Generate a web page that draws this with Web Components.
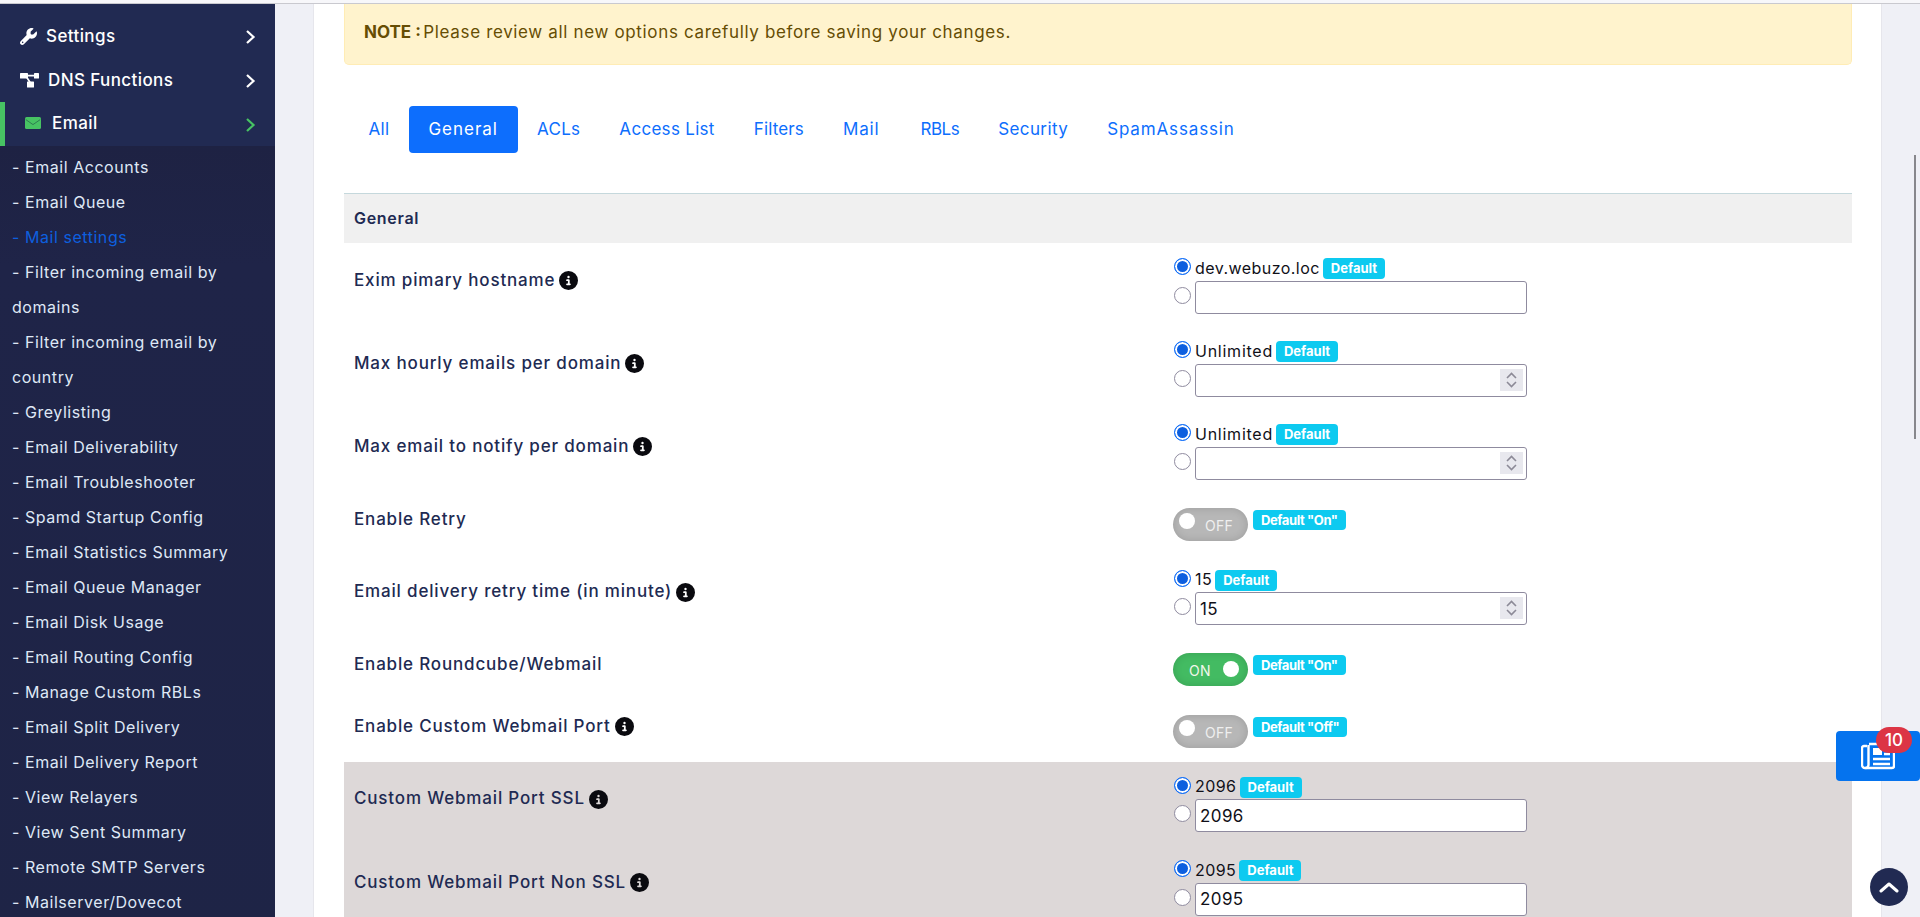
<!DOCTYPE html>
<html lang="en">
<head>
<meta charset="utf-8">
<title>Mail settings</title>
<style>
    html, body { margin: 0; height: 100%; overflow: hidden; background: #eff0f6; }
    body { font-family: Inter, "Noto Sans", sans-serif; }
</style>
</head>
<body>
<app-shell>
    <app-sidebar slot="side">
        <side-head icon="wrench" gap="9">Settings</side-head>
        <side-head icon="diagram" gap="9">DNS Functions</side-head>
        <side-head icon="envelope" gap="11" active>Email</side-head>
        <side-sub>
            <side-link>- Email Accounts</side-link>
            <side-link>- Email Queue</side-link>
            <side-link current>- Mail settings</side-link>
            <side-link>- Filter incoming email by<br>domains</side-link>
            <side-link>- Filter incoming email by<br>country</side-link>
            <side-link>- Greylisting</side-link>
            <side-link>- Email Deliverability</side-link>
            <side-link>- Email Troubleshooter</side-link>
            <side-link>- Spamd Startup Config</side-link>
            <side-link>- Email Statistics Summary</side-link>
            <side-link>- Email Queue Manager</side-link>
            <side-link>- Email Disk Usage</side-link>
            <side-link>- Email Routing Config</side-link>
            <side-link>- Manage Custom RBLs</side-link>
            <side-link>- Email Split Delivery</side-link>
            <side-link>- Email Delivery Report</side-link>
            <side-link>- View Relayers</side-link>
            <side-link>- View Sent Summary</side-link>
            <side-link>- Remote SMTP Servers</side-link>
            <side-link>- Mailserver/Dovecot</side-link>
        </side-sub>
    </app-sidebar>
    <content-card>
        <note-alert><b>NOTE :</b> Please review all new options carefully before saving your changes.</note-alert>
        <tab-bar>
            <tab-link style="--ls:.3px">All</tab-link>
            <tab-link style="--ls:1px" active>General</tab-link>
            <tab-link style="--ls:.3px">ACLs</tab-link>
            <tab-link style="--ls:.3px">Access List</tab-link>
            <tab-link style="--ls:.15px">Filters</tab-link>
            <tab-link style="--ls:.85px;margin-right:2px">Mail</tab-link>
            <tab-link style="--ls:-.5px">RBLs</tab-link>
            <tab-link style="--ls:.4px">Security</tab-link>
            <tab-link style="--ls:.85px">SpamAssassin</tab-link>
        </tab-bar>
        <section-head>General</section-head>
        <setting-row label="Exim pimary hostname" info>
            <radio-field value="dev.webuzo.loc"></radio-field>
        </setting-row>
        <setting-row label="Max hourly emails per domain" info>
            <radio-field style="--vls:.75px" value="Unlimited" spin></radio-field>
        </setting-row>
        <setting-row label="Max email to notify per domain" info>
            <radio-field style="--vls:.75px" value="Unlimited" spin></radio-field>
        </setting-row>
        <setting-row label="Enable Retry" kind="toggle">
            <toggle-field default="Default &quot;On&quot;"></toggle-field>
        </setting-row>
        <setting-row label="Email delivery retry time (in minute)" info>
            <radio-field value="15" input="15" spin></radio-field>
        </setting-row>
        <setting-row label="Enable Roundcube/Webmail" kind="toggle">
            <toggle-field on default="Default &quot;On&quot;"></toggle-field>
        </setting-row>
        <setting-row label="Enable Custom Webmail Port" kind="toggle" info>
            <toggle-field default="Default &quot;Off&quot;"></toggle-field>
        </setting-row>
        <setting-row label="Custom Webmail Port SSL" info shade>
            <radio-field value="2096" input="2096"></radio-field>
        </setting-row>
        <setting-row label="Custom Webmail Port Non SSL" info shade>
            <radio-field value="2095" input="2095"></radio-field>
        </setting-row>
    </content-card>
    <news-button count="10"></news-button>
    <top-button></top-button>
</app-shell>

<script>
const ICONS = {
    wrench: '<svg viewBox="0 0 512 512" width="17" height="17" fill="#fff"><path d="M352 320c88.4 0 160-71.6 160-160c0-15.3-2.2-30.1-6.2-44.2c-3.1-10.8-16.4-13.2-24.3-5.3l-76.8 76.8c-3 3-7.1 4.7-11.3 4.7H336c-8.8 0-16-7.2-16-16V118.6c0-4.2 1.7-8.3 4.7-11.3l76.8-76.8c7.9-7.9 5.4-21.2-5.3-24.3C382.1 2.2 367.3 0 352 0C263.6 0 192 71.6 192 160c0 19.1 3.4 37.5 9.5 54.5L19.9 396.1C7.2 408.8 0 426.1 0 444.1C0 481.6 30.4 512 67.9 512c18 0 35.3-7.2 48-19.9L297.5 310.5c17 6.2 35.4 9.5 54.5 9.5zM80 408a24 24 0 1 1 0 48 24 24 0 1 1 0-48z"/></svg>',
    diagram: '<svg viewBox="0 0 19 15" width="19" height="15" fill="#fff"><rect x="0" y="0" width="8" height="5.5" rx=".6"/><rect x="14" y="0" width="5" height="5.5" rx=".6"/><rect x="7" y="8.5" width="7" height="6" rx=".6"/><path d="M6 1.8h9v1.8H6zM5.5 4l1.4-1L11 9.2l-1.4 1z"/></svg>',
    envelope: '<svg viewBox="0 0 16 12" width="16" height="12"><rect width="16" height="12" rx="1.5" fill="#47c363"/><path d="M.8 2.6L8 7.6l7.2-5" fill="none" stroke="#2a6b4d" stroke-width=".8"/></svg>',
    info: '<svg viewBox="0 0 512 512" width="19" height="19" fill="#0a0a0f"><path d="M256 512A256 256 0 1 0 256 0a256 256 0 1 0 0 512zM216 336h24V272H216c-13.3 0-24-10.7-24-24s10.7-24 24-24h48c13.3 0 24 10.7 24 24v88h8c13.3 0 24 10.7 24 24s-10.7 24-24 24H216c-13.3 0-24-10.7-24-24s10.7-24 24-24zm40-208a32 32 0 1 1 0 64 32 32 0 1 1 0-64z"/></svg>',
    news: '<svg viewBox="0 0 34 28" width="34" height="28" fill="none" stroke="#fff" stroke-width="2.4" stroke-linejoin="round"><path d="M8 2h23a2 2 0 0 1 2 2v20a2 2 0 0 1-2 2H4a3 3 0 0 1-3-3V6a2 2 0 0 1 2-2h3"/><path d="M7.5 3v20a3 3 0 0 1-3 3"/><rect x="12" y="6" width="9" height="7" fill="#fff" stroke="none"/><path d="M12 17h17M12 22h17M23 7h6M23 12h6"/></svg>'
};

function define(name, css, html, setup) {
    customElements.define(name, class extends HTMLElement {
        connectedCallback() {
            if (this.shadowRoot) return;
            this.attachShadow({ mode: 'open' });
            const markup = typeof html === 'function' ? html(this) : html;
            this.shadowRoot.innerHTML = `<style>${css}</style>${markup}`;
            if (setup) setup(this);
        }
    });
}

define('app-shell', `
    :host { display: grid; grid-template-columns: 275px 1569px; column-gap: 38px; height: 917px; overflow: hidden; padding-top: 4px; box-sizing: border-box; position: relative; background: #eff0f6; }
    .line { position: absolute; left: 0; right: 0; top: 3px; height: 1px; background: #c9c9cf; }
    .strip { position: absolute; left: 0; right: 0; top: 0; height: 3px; background: #f7f7fa; }
    .thumb { position: absolute; left: 1914px; top: 155px; width: 2px; height: 284px; background: #87878c; }
`, `<div class="strip"></div><div class="line"></div><slot name="side"></slot><slot></slot><div class="thumb"></div>`);

define('app-sidebar', `
    :host { display: block; background: #212a52; padding-top: 10px; height: 913px; box-sizing: border-box; overflow: hidden; }
`, `<slot></slot>`);

define('side-head', `
    :host { display: flex; align-items: center; height: 44px; padding: 0 20px; color: #fff; font: 500 17px/24px Inter, sans-serif; letter-spacing: .4px; position: relative; box-sizing: border-box; }
    :host([active]) { padding: 0 20px 2px 25px; }
    :host([active])::before { content: ""; position: absolute; left: 0; top: 0; bottom: 0; width: 5px; background: #47c363; }
    .icon { display: flex; }
    .chev { position: absolute; left: 245px; top: 15px; }
`, el => `<span class="icon">${ICONS[el.getAttribute('icon')]}</span>
    <span style="margin-left:${el.getAttribute('gap')}px"><slot></slot></span>
    <svg class="chev" width="11" height="16" viewBox="0 0 11 16" fill="none" stroke="${el.hasAttribute('active') ? '#47c363' : '#fff'}" stroke-width="2.2"><path d="M2 2l6.5 6L2 14"/></svg>`);

define('side-sub', `
    :host { display: block; padding: 3.5px 0 0 12px; background: linear-gradient(#1e2243, #1f2448 120px, #1e2446); min-height: 800px; }
`, `<slot></slot>`);

define('side-link', `
    :host { display: block; color: #dfe8f6; font: 400 16px/35px Inter, sans-serif; letter-spacing: .55px; white-space: nowrap; }
    :host([current]) { color: #0d5fdf; }
`, `<slot></slot>`);

define('content-card', `
    :host { display: block; background: #fff; padding: 0 29px 0 30px; border-left: 1px solid #e6e6ec; border-right: 1px solid #e6e6ec; height: 913px; box-sizing: border-box; overflow: hidden; }
`, `<slot></slot>`);

define('note-alert', `
    :host { display: block; height: 61px; box-sizing: border-box; padding: 16px 19px 0; background: #fff3cd; border: 1px solid #ffecb5; border-top: 0; border-radius: 0 0 5px 5px; color: #664d03; font: 400 17px/24px Inter, sans-serif; letter-spacing: .65px; }
    ::slotted(b) { font-weight: 700; letter-spacing: 0; margin-right: -3px; }
`, `<slot></slot>`);

define('tab-bar', `
    :host { display: flex; padding: 41px 0 40px 5px; }
`, `<slot></slot>`);

define('tab-link', `
    :host { display: block; padding: 0 19.5px; height: 47px; font: 400 17px/47px Inter, sans-serif; letter-spacing: var(--ls, .5px); color: #0d6efd; border-radius: 4px; white-space: nowrap; }
    :host([active]) { background: #0d6efd; color: #fff; }
`, `<slot></slot>`);

define('section-head', `
    :host { display: block; height: 50px; box-sizing: border-box; border-top: 1px solid #c5d8dc; background: #f0f0f0; padding-left: 10px; font: 600 16px/49px Inter, sans-serif; color: #212a52; letter-spacing: .7px; }
`, `<slot></slot>`);

define('setting-row', `
    :host { display: grid; grid-template-columns: 829px 1fr; align-items: center; box-sizing: border-box; height: 83.2px; }
    :host([kind="toggle"]) { height: 62px; }
    :host([shade]) { background: #ddd8d8; }
    .label { display: flex; align-items: center; gap: 4px; padding: 0 0 10px 10px; font: 500 17px/24px Inter, sans-serif; letter-spacing: .83px; color: #212a52; }
    .info { display: flex; margin-top: 2px; }
`, el => `<div class="label"><span>${el.getAttribute('label')}</span>${el.hasAttribute('info') ? `<span class="info">${ICONS.info}</span>` : ''}</div><div><slot></slot></div>`);

define('default-badge', `
    :host { display: inline-block; height: 21px; padding: 0 8px; border-radius: 4px; background: #0dcaf0; color: #fff; font: 700 13px/21px Inter, sans-serif; white-space: nowrap; }
`, `<slot></slot>`);

define('radio-dot', `
    :host { display: inline-block; width: 17px; height: 17px; box-sizing: border-box; border-radius: 50%; background: #fff; border: 1px solid #8f8b9f; flex: none; }
    :host([checked]) { border-color: #0d6efd; background: #0d5fdf; box-shadow: inset 0 0 0 2px #fff; }
`, ``);

define('radio-field', `
    :host { display: block; padding-left: 1px; }
    .line { display: flex; align-items: center; height: 24px; margin-bottom: 1px; }
    .value { margin: 0 3px 0 4px; font: 400 16px/24px Inter, sans-serif; letter-spacing: var(--vls, .45px); color: #101018; }
    .line2 { display: flex; align-items: center; }
    radio-dot { margin-top: -4px; }
    .line radio-dot { margin-top: -2px; }
    default-badge { margin-top: 2px; }
    .box { position: relative; margin-left: 4px; width: 332px; height: 33px; box-sizing: border-box; border: 1px solid #8f8b9f; border-radius: 3px; background: #fff; }
    input { display: block; width: 100%; height: 100%; box-sizing: border-box; border: 0; outline: 0; padding: 0 4px; background: transparent; font: 400 17px Inter, sans-serif; letter-spacing: .4px; color: #101018; border-radius: 3px; }
    .spin { position: absolute; right: 3px; top: 4px; width: 23px; height: 22px; background: #e8e8ee; display: flex; align-items: center; justify-content: center; }
`, el => `<div class="line"><radio-dot checked></radio-dot><span class="value">${el.getAttribute('value')}</span><default-badge>Default</default-badge></div>
    <div class="line2"><radio-dot></radio-dot><div class="box"><input type="text" value="${el.getAttribute('input') || ''}">${el.hasAttribute('spin') ? `<span class="spin"><svg width="11" height="16" viewBox="0 0 11 16" fill="none" stroke="#8c8a97" stroke-width="1.6"><path d="M1 6l4.5-4.5L10 6M1 10l4.5 4.5L10 10"/></svg></span>` : ''}</div></div>`);

define('toggle-field', `
    :host { display: flex; align-items: flex-start; gap: 5px; padding-top: 1px; }
    .sw { position: relative; width: 75px; height: 33px; border-radius: 17px; background: #b7b7b7; box-shadow: inset 0 0 9px rgba(0,0,0,.14); color: #efefef; font: 400 14px/33px Inter, sans-serif; letter-spacing: .3px; }
    .sw.on { background: #43bb62; color: #f2f7ea; }
    .knob { position: absolute; top: 5px; left: 6px; width: 16px; height: 16px; border-radius: 50%; background: #fff; }
    .sw.on .knob { left: 50px; top: 8px; }
    .txt { position: absolute; left: 32px; top: 1px; }
    .sw.on .txt { left: 16px; }
    default-badge { height: 20px; line-height: 20px; margin-top: 2px; letter-spacing: -.4px; }
`, el => `<div class="sw ${el.hasAttribute('on') ? 'on' : ''}"><span class="knob"></span><span class="txt">${el.hasAttribute('on') ? 'ON' : 'OFF'}</span></div><default-badge>${el.getAttribute('default')}</default-badge>`);

define('news-button', `
    :host { position: absolute; left: 1836px; top: 731px; width: 84px; height: 50px; border-radius: 4px; background: #0573ee; display: flex; align-items: center; justify-content: center; }
    .count { position: absolute; left: 40px; top: -4px; width: 36px; height: 26px; border-radius: 13px; background: #dc3545; color: #fff; font: 500 17px/26px Inter, sans-serif; text-align: center; }
    .ico { display: flex; }
`, el => `<span class="ico">${ICONS.news}</span><span class="count">${el.getAttribute('count')}</span>`);

define('top-button', `
    :host { position: absolute; left: 1870px; top: 868px; width: 38px; height: 38px; border-radius: 50%; background: #212a52; display: flex; align-items: center; justify-content: center; }
`, `<svg width="20" height="12" viewBox="0 0 20 12" fill="none" stroke="#fff" stroke-width="3" stroke-linecap="round" stroke-linejoin="round"><path d="M2 10l8-7 8 7"/></svg>`);
</script>
</body>
</html>
